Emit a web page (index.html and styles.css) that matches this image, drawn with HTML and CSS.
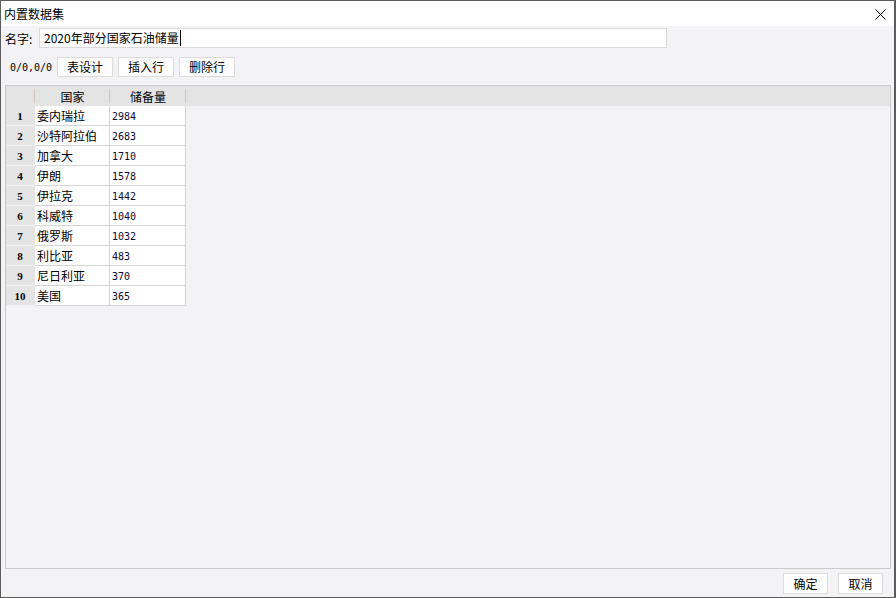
FILE: index.html
```html
<!DOCTYPE html>
<html lang="zh-CN">
<head>
    <meta charset="UTF-8">
    <title>内置数据集</title>
    <link rel="stylesheet" href="styles.css">
</head>
<body>
    <div class="window">
        <div class="titlebar">
            <span class="title">内置数据集</span>
            <svg class="close" width="11" height="11" viewBox="0 0 11 11">
                <path d="M0.5 0.5 L10.5 10.5 M10.5 0.5 L0.5 10.5" stroke="#000" stroke-width="1" fill="none"/>
            </svg>
        </div>
        <div class="content">
            <div class="name-row">
                <label for="nome">名字:</label>
                <div class="name-input" id="nome">2020年部分国家石油储量<span class="caret"></span></div>
            </div>
            <div class="toolbar">
                <span class="pos">0/0,0/0</span>
                <button class="btn">表设计</button>
                <button class="btn">插入行</button>
                <button class="btn">删除行</button>
            </div>
            <div class="grid">
                <table>
                    <thead>
                        <tr>
                            <th class="corner"></th>
                            <th class="col-name">国家</th>
                            <th class="col-val">储备量</th>
                        </tr>
                    </thead>
                    <tbody>
                        <tr><td class="rn">1</td><td class="txt">委内瑞拉</td><td class="num">2984</td></tr>
                        <tr><td class="rn">2</td><td class="txt">沙特阿拉伯</td><td class="num">2683</td></tr>
                        <tr><td class="rn">3</td><td class="txt">加拿大</td><td class="num">1710</td></tr>
                        <tr><td class="rn">4</td><td class="txt">伊朗</td><td class="num">1578</td></tr>
                        <tr><td class="rn">5</td><td class="txt">伊拉克</td><td class="num">1442</td></tr>
                        <tr><td class="rn">6</td><td class="txt">科威特</td><td class="num">1040</td></tr>
                        <tr><td class="rn">7</td><td class="txt">俄罗斯</td><td class="num">1032</td></tr>
                        <tr><td class="rn">8</td><td class="txt">利比亚</td><td class="num">483</td></tr>
                        <tr><td class="rn">9</td><td class="txt">尼日利亚</td><td class="num">370</td></tr>
                        <tr><td class="rn">10</td><td class="txt">美国</td><td class="num">365</td></tr>
                    </tbody>
                </table>
            </div>
            <div class="footer">
                <button class="btn btn-foot">确定</button>
                <button class="btn btn-foot">取消</button>
            </div>
        </div>
    </div>
</body>
</html>
```

FILE: styles.css
```css
html, body {
    margin: 0;
    padding: 0;
}

body {
    font-family: "Noto Sans CJK SC", "Noto Sans", sans-serif;
    font-size: 12px;
    color: #000;
    background-color: #3d3d3d;
}

.window {
    width: 896px;
    height: 598px;
    box-sizing: border-box;
    border: 1px solid #5c5c5c;
    border-right-width: 2px;
    display: flex;
    flex-direction: column;
    background-color: #f3f3f5;
}

.titlebar {
    height: 25px;
    background-color: #fff;
    display: flex;
    align-items: center;
    justify-content: space-between;
    padding: 0 8px 0 3px;
}

.title {
    font-size: 12px;
}

.close {
    display: block;
    margin-top: 1px;
}

.content {
    flex: 1;
    display: flex;
    flex-direction: column;
}

.name-row {
    display: flex;
    align-items: center;
    margin-top: 2px;
    padding-left: 4px;
}

.name-row label {
    width: 34px;
}

.name-input {
    width: 622px;
    height: 18px;
    line-height: 18px;
    background-color: #fff;
    border: 1px solid #d9d9d9;
    padding-left: 4px;
    font-size: 12px;
}

.caret {
    display: inline-block;
    width: 1px;
    height: 16px;
    background-color: #000;
    vertical-align: -3px;
    margin-left: 1px;
}

.toolbar {
    display: flex;
    align-items: center;
    gap: 5px;
    margin-top: 9px;
    padding-left: 9px;
}

.pos {
    font-family: "DejaVu Sans Mono", monospace;
    font-size: 10px;
    width: 42px;
}

.btn {
    font-family: "Noto Sans CJK SC", sans-serif;
    font-size: 12px;
    background-color: #fff;
    border: 1px solid #dcdcdc;
    padding: 0;
    width: 56px;
    height: 20px;
    line-height: 18px;
    color: #000;
}

.grid {
    flex: 1;
    margin: 8px 3px 0 4px;
    border: 1px solid #cacaca;
    background: linear-gradient(#e4e4e4 0, #e4e4e4 20px, #f3f3f5 20px);
}

table {
    border-collapse: separate;
    border-spacing: 0;
}

th {
    height: 20px;
    padding: 0;
    font-weight: normal;
    text-align: center;
    background: linear-gradient(#d3cbbb, #d3cbbb) right center / 1px 14px no-repeat;
}

th.corner {
    width: 29px;
}

th.col-name {
    width: 75px;
}

th.col-val {
    width: 76px;
}

td {
    height: 19px;
    padding: 0;
    border-right: 1px solid #d4d4d4;
    border-bottom: 1px solid #d4d4d4;
    background-color: #fff;
}

td.rn {
    background-color: #e4e4e4;
    border-right: none;
    border-bottom-color: #f0f0f0;
    text-align: center;
    font-family: "Liberation Serif", serif;
    font-weight: bold;
    font-size: 11px;
    padding: 1px 1px 0 0;
    height: 18px;
}

td.txt {
    padding-left: 2px;
}

td.num {
    padding: 2px 0 0 2px;
    height: 17px;
    font-family: "DejaVu Sans Mono", monospace;
    font-size: 10px;
    color: #0a0a30;
}

.footer {
    display: flex;
    justify-content: flex-end;
    gap: 10px;
    margin-top: 4px;
    padding: 0 11px 3px 0;
}

.btn-foot {
    width: 45px;
    height: 21px;
}
```
